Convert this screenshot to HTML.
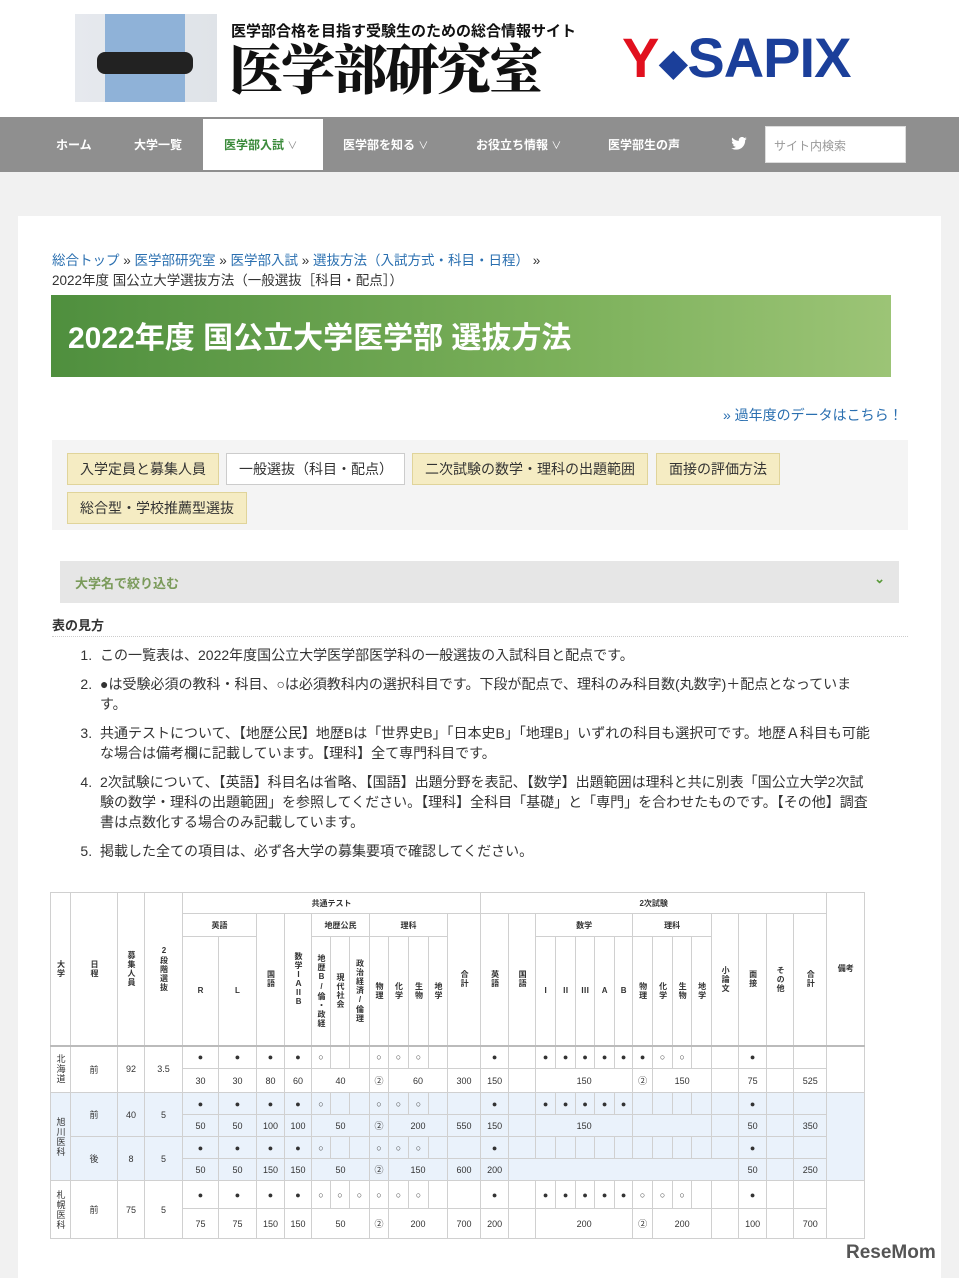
<!DOCTYPE html>
<html><head><meta charset="utf-8">
<style>
*{box-sizing:border-box;margin:0;padding:0}
body{width:959px;height:1278px;overflow:hidden;background:#f1f1f1;font-family:"Liberation Sans","Noto Sans CJK JP",sans-serif;color:#333;position:relative}
.hdr{position:absolute;left:0;top:0;width:959px;height:117px;background:#fff}
.photo{position:absolute;left:75px;top:14px;width:142px;height:88px;background:linear-gradient(90deg,#e6e9ee,#dfe3e8)}
.nav{position:absolute;left:0;top:117px;width:959px;height:55px;background:#8f8f8f}
.nav span{position:absolute;top:19px;color:#fff;font-size:12px;font-weight:bold}
.card{position:absolute;left:18px;top:216px;width:923px;height:1062px;background:#fff}
a{color:#2a6fb0;text-decoration:none}
.tab{position:absolute;height:32px;border:1px solid #e0d49a;background:#f5ecc3;font-size:14px;line-height:30px;padding:0 12px;color:#333;white-space:nowrap}
table{position:absolute;left:50px;top:892px;border-collapse:collapse;table-layout:fixed;width:814px;font-size:9px}
td,th{border:1px solid #d0d0d0;text-align:center;vertical-align:middle;padding:0;overflow:hidden;color:#333}
th{font-weight:bold;font-size:8px}
.v{writing-mode:vertical-rl;text-orientation:upright;margin:auto;line-height:10px;letter-spacing:1px}
.b td{background:#eaf2fb}
ol{position:absolute;left:96px;top:645px;width:780px;font-size:14px;line-height:20px;color:#333}
ol li{margin-bottom:9px;padding-left:4px}
</style></head><body>
<div class="hdr">
<div class="photo"><div style="position:absolute;left:30px;top:0;width:80px;height:88px;background:#8fb2d8"></div><div style="position:absolute;left:22px;top:38px;width:96px;height:22px;background:#222;border-radius:8px"></div></div>
<div style="position:absolute;left:231px;top:20px;font-size:15px;font-weight:bold;color:#111">医学部合格を目指す受験生のための総合情報サイト</div>
<div style="position:absolute;left:229px;top:36px;font-size:54px;font-family:'Noto Serif CJK SC',serif;font-weight:900;color:#111;line-height:62px;letter-spacing:-2px">医学部研究室</div>
<div style="position:absolute;left:622px;top:28px;font-size:56px;font-weight:bold;line-height:60px;letter-spacing:-1px"><span style="color:#e1101e">Y</span><span style="color:#1b3f9a;font-size:30px">◆</span><span style="color:#1b3f9a">SAPIX</span></div>
</div>
<div class="nav">
<span style="left:56px">ホーム</span><span style="left:134px">大学一覧</span>
<div style="position:absolute;left:203px;top:2px;width:120px;height:51px;background:#fff"></div>
<span style="left:224px;color:#3a8a3a">医学部入試 <small style="font-weight:normal;color:#888">∨</small></span>
<span style="left:343px">医学部を知る <small style="font-weight:normal">∨</small></span>
<span style="left:476px">お役立ち情報 <small style="font-weight:normal">∨</small></span>
<span style="left:608px">医学部生の声</span>
<svg style="position:absolute;left:731px;top:20px" width="16" height="13" viewBox="0 0 24 20"><path fill="#fff" d="M24 2.4a10 10 0 0 1-2.8.8A5 5 0 0 0 23.3.4a10 10 0 0 1-3.1 1.2A4.9 4.9 0 0 0 11.8 6 14 14 0 0 1 1.7.9a4.9 4.9 0 0 0 1.5 6.6A4.9 4.9 0 0 1 1 6.9a4.9 4.9 0 0 0 3.9 4.8 5 5 0 0 1-2.2.1 4.9 4.9 0 0 0 4.6 3.4A9.9 9.9 0 0 1 0 17.3 14 14 0 0 0 7.5 19.5c9.1 0 14-7.5 14-14v-.6A10 10 0 0 0 24 2.4z"/></svg>
<div style="position:absolute;left:765px;top:9px;width:141px;height:37px;background:#fff;border:1px solid #ddd;font-size:12px;color:#999;padding:10px 8px">サイト内検索</div>
</div>
<div class="card"></div>
<div style="position:absolute;left:52px;top:251px;font-size:13.5px;line-height:20px;width:580px"><a>総合トップ</a> » <a>医学部研究室</a> » <a>医学部入試</a> » <a>選抜方法（入試方式・科目・日程）</a> »<br>2022年度 国公立大学選抜方法（一般選抜［科目・配点］）</div>
<div style="position:absolute;left:51px;top:295px;width:840px;height:82px;background:linear-gradient(90deg,#4f8f3e,#7bb05a 60%,#9cc476);"></div>
<div style="position:absolute;left:68px;top:313px;font-size:30px;font-weight:bold;color:#fff">2022年度 国公立大学医学部 選抜方法</div>
<div style="position:absolute;left:723px;top:405px;font-size:14px"><a>» 過年度のデータはこちら！</a></div>
<div style="position:absolute;left:52px;top:440px;width:856px;height:90px;background:#f4f4f4"></div>
<div class="tab" style="left:67px;top:453px">入学定員と募集人員</div>
<div class="tab" style="left:226px;top:453px;background:#fff;border-color:#ccc;width:179px">一般選抜（科目・配点）</div>
<div class="tab" style="left:412px;top:453px">二次試験の数学・理科の出題範囲</div>
<div class="tab" style="left:656px;top:453px">面接の評価方法</div>
<div class="tab" style="left:67px;top:492px">総合型・学校推薦型選抜</div>
<div style="position:absolute;left:60px;top:561px;width:839px;height:42px;background:#e6e6e6;font-size:13px;font-weight:bold;color:#7a9a5a;padding:12px 15px">大学名で絞り込む<span style="position:absolute;right:14px;top:10px;color:#5a9a3a">⌄</span></div>
<div style="position:absolute;left:52px;top:615px;width:856px;height:22px;font-size:13px;font-weight:bold;border-bottom:1px dotted #ccc">表の見方</div>
<ol>
<li>この一覧表は、2022年度国公立大学医学部医学科の一般選抜の入試科目と配点です。</li>
<li>●は受験必須の教科・科目、○は必須教科内の選択科目です。下段が配点で、理科のみ科目数(丸数字)＋配点となっています。</li>
<li>共通テストについて、【地歴公民】地歴Bは「世界史B」「日本史B」「地理B」いずれの科目も選択可です。地歴Ａ科目も可能な場合は備考欄に記載しています。【理科】全て専門科目です。</li>
<li>2次試験について、【英語】科目名は省略、【国語】出題分野を表記、【数学】出題範囲は理科と共に別表「国公立大学2次試験の数学・理科の出題範囲」を参照してください。【理科】全科目「基礎」と「専門」を合わせたものです。【その他】調査書は点数化する場合のみ記載しています。</li>
<li>掲載した全ての項目は、必ず各大学の募集要項で確認してください。</li>
</ol>
<table>
<colgroup><col style="width:20px"><col style="width:47px"><col style="width:27px"><col style="width:38px"><col style="width:36px"><col style="width:38px"><col style="width:28px"><col style="width:27px"><col style="width:19px"><col style="width:19px"><col style="width:20px"><col style="width:19px"><col style="width:20px"><col style="width:20px"><col style="width:19px"><col style="width:33px"><col style="width:28px"><col style="width:27px"><col style="width:20px"><col style="width:20px"><col style="width:19px"><col style="width:20px"><col style="width:18px"><col style="width:20px"><col style="width:20px"><col style="width:19px"><col style="width:20px"><col style="width:27px"><col style="width:28px"><col style="width:27px"><col style="width:33px"><col style="width:38px"></colgroup>
<tr style="height:21px"><th rowspan="3"><div class="v">大学</div></th><th rowspan="3"><div class="v">日程</div></th><th rowspan="3"><div class="v">募集人員</div></th><th rowspan="3"><div class="v">2段階選抜</div></th><th colspan="12">共通テスト</th><th colspan="15">2次試験</th><th rowspan="3">備考</th></tr>
<tr style="height:23px"><th colspan="2">英語</th><th rowspan="2"><div class="v">国語</div></th><th rowspan="2"><div class="v">数学ⅠＡⅡＢ</div></th><th colspan="3">地歴公民</th><th colspan="4">理科</th><th rowspan="2"><div class="v">合計</div></th><th rowspan="2"><div class="v">英語</div></th><th rowspan="2"><div class="v">国語</div></th><th colspan="5">数学</th><th colspan="4">理科</th><th rowspan="2"><div class="v">小論文</div></th><th rowspan="2"><div class="v">面接</div></th><th rowspan="2"><div class="v">その他</div></th><th rowspan="2"><div class="v">合計</div></th></tr>
<tr style="height:109px;border-bottom:2px solid #bbb"><th>R</th><th>L</th><th><div class="v">地歴B/倫・政経</div></th><th><div class="v">現代社会</div></th><th><div class="v">政治経済/倫理</div></th><th><div class="v">物理</div></th><th><div class="v">化学</div></th><th><div class="v">生物</div></th><th><div class="v">地学</div></th><th>Ⅰ</th><th>Ⅱ</th><th>Ⅲ</th><th>A</th><th>B</th><th><div class="v">物理</div></th><th><div class="v">化学</div></th><th><div class="v">生物</div></th><th><div class="v">地学</div></th></tr>
<tr style="height:23px"><td rowspan="2"><div class="v" style="font-weight:normal">北海道</div></td><td rowspan="2">前</td><td rowspan="2">92</td><td rowspan="2">3.5</td><td>●</td><td>●</td><td>●</td><td>●</td><td>○</td><td></td><td></td><td>○</td><td>○</td><td>○</td><td></td><td></td><td>●</td><td></td><td>●</td><td>●</td><td>●</td><td>●</td><td>●</td><td>●</td><td>○</td><td>○</td><td></td><td></td><td>●</td><td></td><td></td><td rowspan="2"></td></tr>
<tr style="height:24px"><td>30</td><td>30</td><td>80</td><td>60</td><td colspan="3">40</td><td>②</td><td colspan="3">60</td><td>300</td><td>150</td><td></td><td colspan="5">150</td><td>②</td><td colspan="3">150</td><td></td><td>75</td><td></td><td>525</td></tr>
<tr class="b" style="height:22px"><td rowspan="4"><div class="v">旭川医科</div></td><td rowspan="2">前</td><td rowspan="2">40</td><td rowspan="2">5</td><td>●</td><td>●</td><td>●</td><td>●</td><td>○</td><td></td><td></td><td>○</td><td>○</td><td>○</td><td></td><td></td><td>●</td><td></td><td>●</td><td>●</td><td>●</td><td>●</td><td>●</td><td></td><td></td><td></td><td></td><td></td><td>●</td><td></td><td></td><td rowspan="4"></td></tr>
<tr class="b" style="height:22px"><td>50</td><td>50</td><td>100</td><td>100</td><td colspan="3">50</td><td>②</td><td colspan="3">200</td><td>550</td><td>150</td><td></td><td colspan="5">150</td><td colspan="4"></td><td></td><td>50</td><td></td><td>350</td></tr>
<tr class="b" style="height:22px"><td rowspan="2">後</td><td rowspan="2">8</td><td rowspan="2">5</td><td>●</td><td>●</td><td>●</td><td>●</td><td>○</td><td></td><td></td><td>○</td><td>○</td><td>○</td><td></td><td></td><td>●</td><td></td><td></td><td></td><td></td><td></td><td></td><td></td><td></td><td></td><td></td><td></td><td>●</td><td></td><td></td></tr>
<tr class="b" style="height:22px"><td>50</td><td>50</td><td>150</td><td>150</td><td colspan="3">50</td><td>②</td><td colspan="3">150</td><td>600</td><td>200</td><td colspan="11"></td><td>50</td><td></td><td>250</td></tr>
<tr style="height:28px"><td rowspan="2"><div class="v">札幌医科</div></td><td rowspan="2">前</td><td rowspan="2">75</td><td rowspan="2">5</td><td>●</td><td>●</td><td>●</td><td>●</td><td>○</td><td>○</td><td>○</td><td>○</td><td>○</td><td>○</td><td></td><td></td><td>●</td><td></td><td>●</td><td>●</td><td>●</td><td>●</td><td>●</td><td>○</td><td>○</td><td>○</td><td></td><td></td><td>●</td><td></td><td></td><td rowspan="2"></td></tr>
<tr style="height:30px"><td>75</td><td>75</td><td>150</td><td>150</td><td colspan="3">50</td><td>②</td><td colspan="3">200</td><td>700</td><td>200</td><td></td><td colspan="5">200</td><td>②</td><td colspan="3">200</td><td></td><td>100</td><td></td><td>700</td></tr>
</table>
<div style="position:absolute;left:846px;top:1242px;font-size:19px;font-weight:bold;color:#555">ReseMom</div>
</body></html>
